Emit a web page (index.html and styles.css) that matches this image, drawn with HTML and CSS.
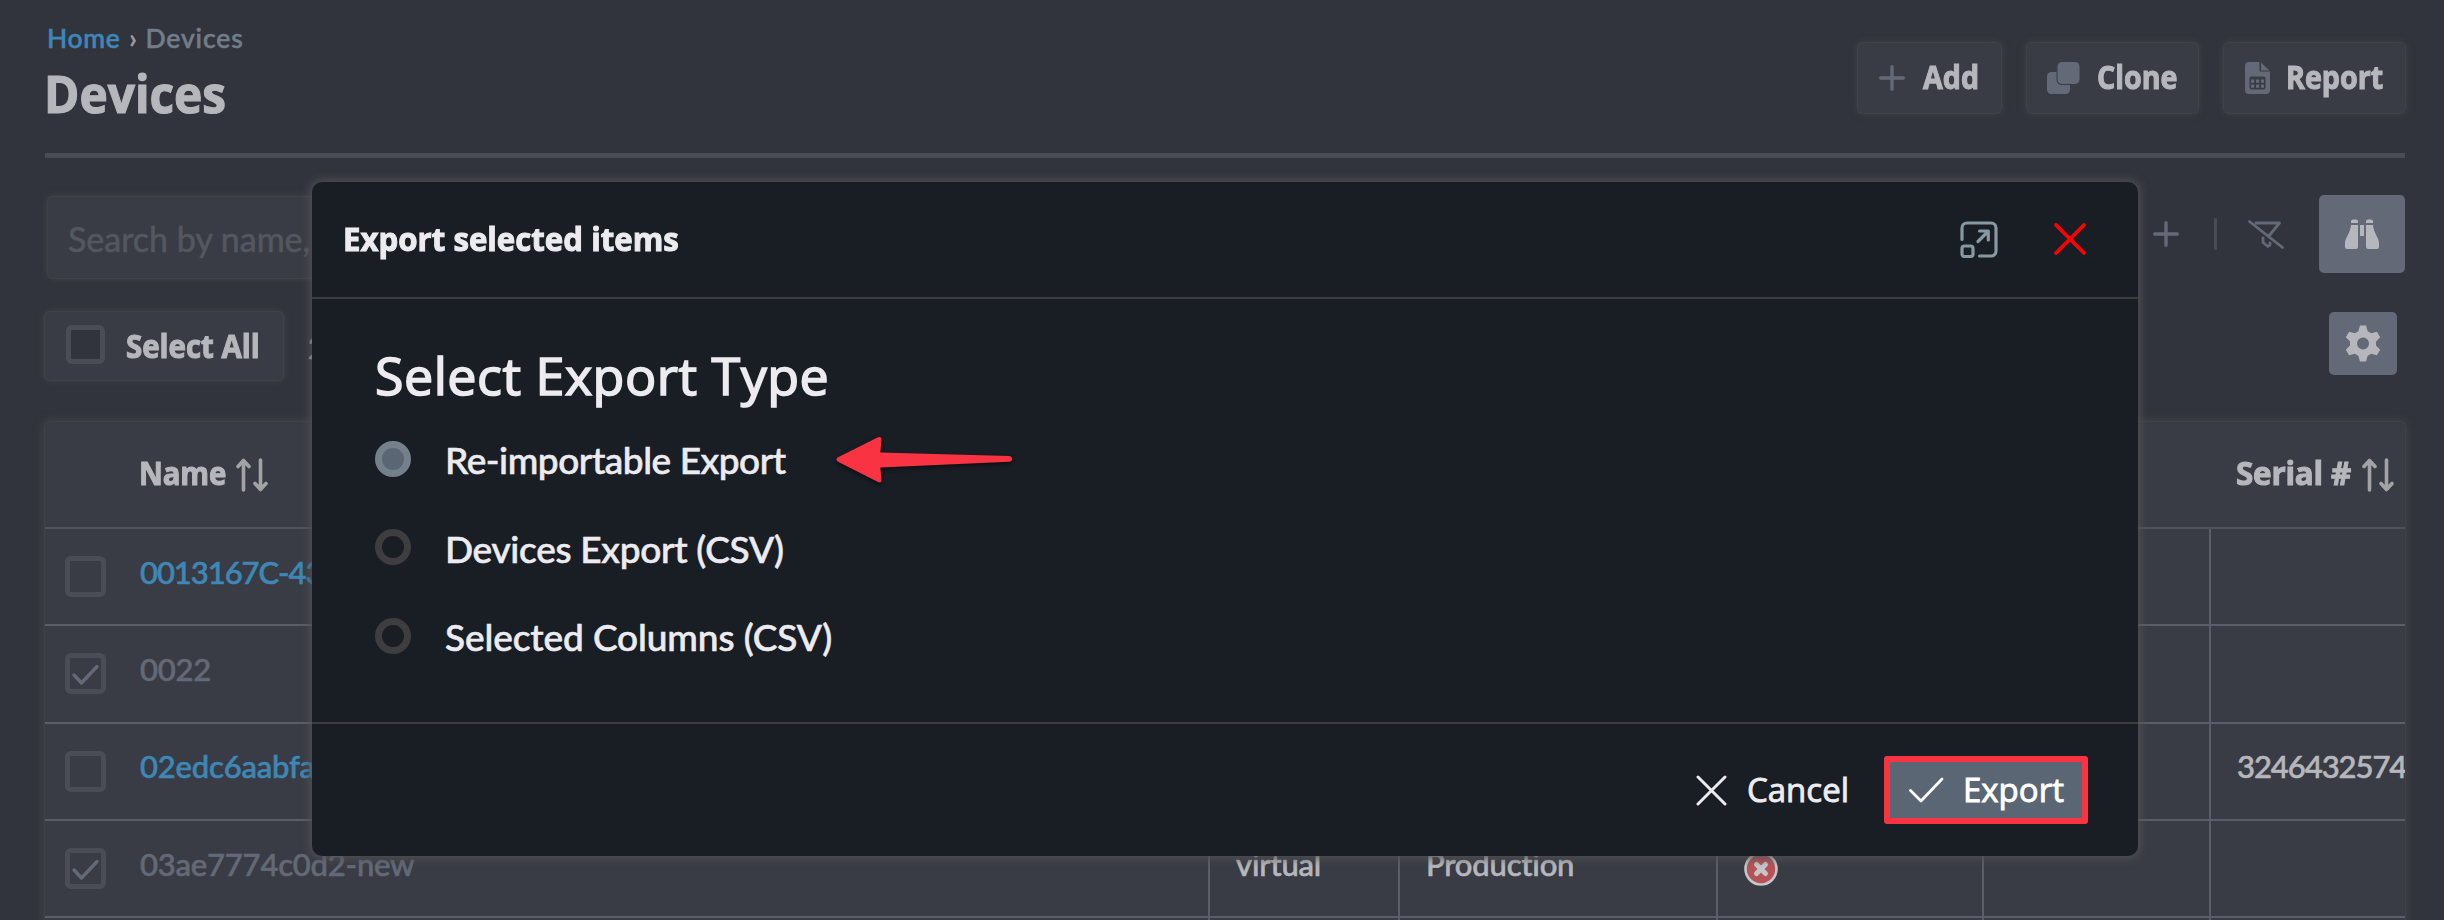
FILE: index.html
```html
<!DOCTYPE html>
<html lang="en">
<head>
<meta charset="utf-8">
<title>Devices</title>
<link rel="stylesheet" href="styles.css">
</head>
<body>
<svg class="defs" width="0" height="0">
  <symbol id="sort" viewBox="0 0 32 34"><path d="M7.500 32V2.500M2 8.500l5.500-6 5.500 6M24.500 2V31.500M19 25.500l5.500 6 5.500-6" fill="none" stroke="currentColor" stroke-width="3.600" stroke-linecap="round" stroke-linejoin="round"/></symbol>
  <symbol id="plus" viewBox="0 0 26 26"><path d="M13 1.700v22.600M1.700 13h22.600" fill="none" stroke="currentColor" stroke-width="3.400" stroke-linecap="round"/></symbol>
  <symbol id="tick" viewBox="0 0 31 31"><path d="M4 17l7.500 8L27 8.500" fill="none" stroke="currentColor" stroke-width="3.400" stroke-linecap="round" stroke-linejoin="round"/></symbol>
</svg>
<main class="page">
  <header class="top">
    <div class="titles">
      <nav class="crumbs"><a class="link">Home</a><span class="sep">›</span><span class="t-crumb">Devices</span></nav>
      <h1 class="title">Devices</h1>
    </div>
    <div class="actions">
      <button class="btn btn-add"><svg width="26" height="26"><use href="#plus"/></svg><span class="label">Add</span></button>
      <button class="btn btn-clone"><svg width="33" height="32" viewBox="0 0 33 32" fill="currentColor"><rect x="0" y="10" width="23" height="22" rx="4.500"/><rect class="cut" x="9.500" y="-1" width="24.500" height="24" rx="5"/><rect x="10.500" y="0" width="22" height="22" rx="4.500"/></svg><span class="label">Clone</span></button>
      <button class="btn btn-report"><svg width="25" height="32" viewBox="0 0 25 32" fill="currentColor"><path d="M4 0h10.500v9.500H25V28a4 4 0 0 1-4 4H4a4 4 0 0 1-4-4V4a4 4 0 0 1 4-4z"/><path d="M16 .5L24.500 8.500H16z"/><rect class="cut" x="4.500" y="14.500" width="16" height="13" rx="2"/><path d="M6 17.500h3.200v3.300H6zM11 17.500h3.200v3.300H11zM16 17.500h3v3.300h-3zM6 22.500h3.200v3.300H6zM11 22.500h3.200v3.300H11zM16 22.500h3v3.300h-3z"/></svg><span class="label">Report</span></button>
    </div>
  </header>
  <hr class="rule">
  <section class="search-row">
    <div class="search">Search by name,</div>
    <div class="filters">
      <svg width="26" height="26"><use href="#plus"/></svg>
      <i class="bar"></i>
      <svg width="36" height="29" viewBox="0 0 36 29" fill="none" stroke="currentColor" stroke-width="2.800" stroke-linecap="round" stroke-linejoin="round"><path d="M1.500 1.500l33 26M8 3h23.500l-9.800 12M15 18v4.500l5 4 2-1.500v-2"/></svg>
      <button class="tile find"><svg width="34" height="30" viewBox="0 0 34 30" fill="currentColor"><path d="M6 4V2.500a2 2 0 0 1 2-2h3a2 2 0 0 1 2 2V4zM21 4V2.500a2 2 0 0 1 2-2h3a2 2 0 0 1 2 2V4zM6 6h7v22a2 2 0 0 1-2 2H2a2 2 0 0 1-2-2v-4c0-5 5-9 6-18zM28 6h-7v22a2 2 0 0 0 2 2h9a2 2 0 0 0 2-2v-4c0-5-5-9-6-18zM15 6h4v11h-4z"/></svg></button>
    </div>
  </section>
  <section class="select-row">
    <button class="btn select-all"><i class="box"></i><span class="label">Select All</span></button>
    <span class="count">2</span>
    <button class="tile gear"><svg width="36" height="37" viewBox="0 0 36 37"><path fill="currentColor" fill-rule="evenodd" d="M15 .5h6l1.700 5.800 3.400 2 5.800-1.500 3.300 5.400-4.200 4.200v4.200l4.200 4.200-3.300 5.400-5.800-1.500-3.400 2L21 36.500h-6l-1.700-5.800-3.400-2-5.800 1.500-3.300-5.400L5 20.600v-4.200L.8 12.200l3.300-5.400 5.800 1.500 3.400-2zM18 12.500a6 6 0 1 0 0 12 6 6 0 0 0 0-12z"/></svg></button>
  </section>
  <section class="table">
    <div class="row head"><div class="c-name"><span>Name</span><svg class="sort" width="32" height="34"><use href="#sort"/></svg></div><div></div><div></div><div></div><div class="c-last"><svg class="sort" width="32" height="34"><use href="#sort"/></svg></div><div class="c-serial"><span>Serial #</span><svg class="sort" width="32" height="34"><use href="#sort"/></svg></div></div>
    <div class="row"><div class="c-first"><i class="box"></i><a class="link tight">0013167C-43</a></div><div></div><div></div><div></div><div></div><div></div></div>
    <div class="row off"><div class="c-first"><i class="box"><svg width="31" height="31"><use href="#tick"/></svg></i><span>0022</span></div><div></div><div></div><div></div><div></div><div></div></div>
    <div class="row"><div class="c-first"><i class="box"></i><a class="link">02edc6aabfa</a></div><div></div><div></div><div></div><div></div><div class="cell"><span class="tight">3246432574</span></div></div>
    <div class="row off"><div class="c-first"><i class="box"><svg width="31" height="31"><use href="#tick"/></svg></i><span>03ae7774c0d2-new</span></div><div class="cell"><span>virtual</span></div><div class="cell"><span>Production</span></div><div class="cell"><svg width="34" height="34" viewBox="0 0 34 34"><circle cx="17" cy="17" r="15.500" fill="#b75357" stroke="#c4c6c9" stroke-width="2.600"/><path d="M12.500 12.500l9 9m0-9l-9 9" stroke="#c4c6c9" stroke-width="5" stroke-linecap="round"/></svg></div><div></div><div></div></div>
    <div class="row"><div></div><div></div><div></div><div></div><div></div><div></div></div>
  </section>
</main>

<div class="modal" role="dialog">
  <header class="modal-head">
    <h2>Export selected items</h2>
    <svg class="expand" width="38" height="37" viewBox="0 0 38 37" fill="none" stroke="currentColor" stroke-width="3.200" stroke-linecap="round" stroke-linejoin="round"><path d="M2 18.500V7a5 5 0 0 1 5-5h24a5 5 0 0 1 5 5v23a5 5 0 0 1-5 5H19.500M18 20.500L28 10.500M19.500 10H28.300V19"/><rect x="2" y="25" width="11" height="10.500" rx="2.500"/></svg>
    <svg class="close" width="32" height="32" viewBox="0 0 32 32" stroke="currentColor" stroke-width="3.800" stroke-linecap="round"><path d="M2 2l28 28M30 2L2 30"/></svg>
  </header>
  <div class="modal-body">
    <h3>Select Export Type</h3>
    <label class="opt"><i class="radio on"></i><span class="opt-main">Re-importable Export</span>
      <svg class="arrow" width="180" height="52" viewBox="0 0 180 52"><path fill="#f93341" d="M2.500 23.500L43 3.200q3.500-1 3.500 2L45.300 18.500 174 22q3 .4 3 3t-3 2.800L45.300 33.600l1.200 12.600q0 3-3.500 1.900L2.500 27.500q-2-2 0-4z"/></svg></label>
    <label class="opt"><i class="radio"></i><span>Devices Export (CSV)</span></label>
    <label class="opt"><i class="radio"></i><span class="opt-cols">Selected Columns (CSV)</span></label>
  </div>
  <footer class="modal-foot">
    <button class="plain"><svg width="31" height="31" viewBox="0 0 31 31" stroke="currentColor" stroke-width="3" stroke-linecap="round"><path d="M2 2l27 27M29 2L2 29"/></svg><span>Cancel</span></button>
    <button class="primary"><svg width="35" height="26" viewBox="0 0 35 26" fill="none" stroke="currentColor" stroke-width="2.800" stroke-linecap="round" stroke-linejoin="round"><path d="M1.500 13.500L12 24 33 2"/></svg><span>Export</span></button>
  </footer>
</div>
</body>
</html>
```
FILE: styles.css
```css
* { box-sizing: border-box; }
body { margin: 0; width: 2444px; height: 920px; overflow: hidden; position: relative; background: #31343c; color: #b6b7bc; font-family: Lato, sans-serif; font-size: 31px; font-weight: 500; -webkit-text-stroke: .6px currentColor; }
.defs { display: block; position: absolute; }
button { border: 0; background: none; color: inherit; font: inherit; padding: 0; }
h1, h2, h3 { margin: 0; white-space: nowrap; }
span, a { white-space: nowrap; }
svg { flex: none; display: block; }
.link { color: #3e87b6; }

.page { padding: 0 39px 0 45px; height: 920px; overflow: hidden; }
.top { height: 153px; display: flex; justify-content: space-between; }
.titles { padding: 19px 0 0 2px; }
.crumbs { display: flex; height: 36px; line-height: 38px; font-size: 26.500px; letter-spacing: .6px; color: #737d88; }
.sep { margin: 0 8px 0 9px; color: #9a9da3; }
.t-crumb { letter-spacing: .9px; }
.title { font: 700 52px/76px "Open Sans", sans-serif; color: #b6b7bc; transform: scaleX(.920); transform-origin: 0 50%; margin-left: -3px; -webkit-text-stroke: 1.200px currentColor; }
.actions { display: flex; gap: 26px; padding-top: 43px; }
.btn { display: flex; align-items: center; background: #393c44; border-radius: 5px; box-shadow: 0 0 0 1px #3f4249, 0 0 7px 1px #404349; font: 700 32px/40px "Open Sans", sans-serif; }
.label { padding-bottom: 2px; transform: scaleX(.895); transform-origin: 0 50%; -webkit-text-stroke: 1.100px currentColor; }
.actions .btn { height: 70px; }
.btn svg { color: #636977; }
.cut { fill: #393c44; }
.btn-add { width: 143px; padding-left: 21px; gap: 18px; }
.btn-clone { width: 171px; padding-left: 20px; gap: 17px; }
.btn-report { width: 181px; padding-left: 21px; gap: 16px; }
.rule { margin: 0; border: 0; height: 5px; background: #494c54; }

.search-row { margin-top: 37px; height: 83px; display: flex; justify-content: space-between; }
.search { margin: 2px 0 0 3px; width: 1900px; height: 81px; padding: 2px 20px 0; display: flex; align-items: center; background: #393c44; border-radius: 5px; box-shadow: 0 0 0 1px #3f4249, 0 0 7px 1px #404349; font-size: 34px; font-weight: 400; letter-spacing: 0; color: #535760; }
.filters { display: flex; align-items: center; height: 78px; color: #636977; }
.bar { width: 3px; height: 32px; margin: 0 31px 0 35px; background: #494c54; border-radius: 2px; }
.tile { display: flex; align-items: center; justify-content: center; background: #636977; border-radius: 5px; color: #b6b7bc; }
.find { width: 86px; height: 78px; margin-left: 35px; }
.select-row { margin-top: 34px; height: 68px; display: flex; align-items: flex-start; }
.select-all { width: 238px; height: 68px; padding-left: 21px; gap: 21px; }
.select-all .label { padding-bottom: 0; transform: scaleX(.92); }
.box { flex: none; width: 41px; height: 41px; border: 5px solid #4a4d55; border-radius: 6px; color: #636977; }
.select-all .box { width: 39px; height: 39px; margin-bottom: 4px; background: #31343c; }
.count { margin-left: 25px; line-height: 70px; flex: 1; }
.gear { width: 68px; height: 63px; margin-right: 8px; }

.table { margin-top: 42px; background: #393c44; border-radius: 5px 5px 0 0; box-shadow: 0 0 0 1px #3f4249, 0 0 8px 2px #404349; }
.row { display: grid; grid-template-columns: 1165px 190px 318px 266px 227px 194px; height: 97.330px; border-bottom: 2px solid #5b5e68; }
.row > div { display: flex; align-items: center; border-right: 2px solid #5b5e68; overflow: hidden; }
.row > div:last-child { border-right: 0; }
.head { height: 107px; border-color: #50535b; font: 700 33px/40px "Open Sans", sans-serif; }
.row.head > div { border: 0; }
.head span { padding-bottom: 4px; transform: scaleX(.92); transform-origin: 0 50%; -webkit-text-stroke: 1.100px currentColor; }
.sort { color: #a3a3a5; }
.c-name { padding-left: 94px; }
.c-name span { width: 97px; transform: scaleX(.89); }
.c-last { padding-left: 101px; }
.c-serial { padding-left: 25px; }
.c-serial span { width: 126px; transform: scaleX(.95); }
.c-first { padding-left: 20px; }
.c-first a, .c-first span { margin-left: 34px; padding-bottom: 10px; }
.cell { padding-left: 26px; }
.cell span { padding-bottom: 10px; }
.row a, .row span { letter-spacing: -.2px; }
.row .tight { letter-spacing: -1.050px; }
.off .c-first { color: #636977; }

.modal { position: absolute; left: 312px; top: 182px; width: 1826px; height: 674px; background: #191d24; border-radius: 10px; box-shadow: 0 0 10px 2px #505254; color: #ececf0; display: flex; flex-direction: column; }
.modal-head { height: 117px; padding: 0 52px 0 31px; border-bottom: 2px solid #3c3d40; display: flex; align-items: center; }
.modal-head h2 { flex: 1; font: 700 32px/40px "Open Sans", sans-serif; padding-bottom: 2px; transform: scaleX(.975); transform-origin: 0 50%; -webkit-text-stroke: 1px currentColor; }
.expand { color: #8798a2; margin: 0 56px 1px 0; }
.close { color: #f00; margin-bottom: 1px; }
.modal-body { height: 425px; padding: 39px 0 0 63px; border-bottom: 2px solid #3c3d40; font-size: 37px; letter-spacing: -.3px; }
.modal-body h3 { font: 500 52px/74px "Open Sans", sans-serif; height: 77px; letter-spacing: .5px; -webkit-text-stroke: 1.600px currentColor; }
.opt { display: flex; align-items: center; height: 88.500px; }
.opt span { padding-top: 1px; }
.opt-main { width: 340px; letter-spacing: -.450px; }
.opt-cols { letter-spacing: -.1px; }
.radio { flex: none; width: 36px; height: 36px; border: 7px solid #3e3e41; border-radius: 50%; margin: 0 34px 1px 0; }
.radio.on { border-color: #75808d; background: #5a6673; }
.arrow { margin: 2px 0 0 50px; filter: drop-shadow(0 2px 2px #0008); }
.modal-foot { flex: 1; display: flex; justify-content: flex-end; align-items: center; padding-right: 50px; font: 500 33px/40px "Open Sans", sans-serif; letter-spacing: -.5px; -webkit-text-stroke: .9px currentColor; }
.plain { display: flex; align-items: center; gap: 20px; margin-right: 35px; }
.primary { display: flex; align-items: center; width: 204px; height: 68px; border: 6px solid #f93341; border-radius: 3px; background: #5a6673; padding-left: 19px; gap: 19px; color: #fff; }
```
